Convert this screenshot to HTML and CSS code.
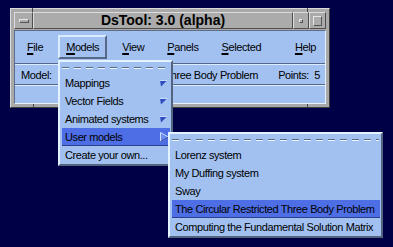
FILE: index.html
```html
<!DOCTYPE html>
<html lang="en">
<head>
  <meta charset="UTF-8" />
  <title>DsTool</title>
  <link rel="stylesheet" href="styles.css">
</head>
<body>
  <div class="window">
    <span class="mark mark-tl"></span>
    <span class="mark mark-tr"></span>
    <span class="mark mark-bl"></span>
    <span class="mark mark-br"></span>
    <div class="titlebar">
      <div class="tbtn menu-btn"><span class="bar"></span></div>
      <div class="title">DsTool: 3.0 (alpha)</div>
      <div class="tbtn min-btn"><span class="dot"></span></div>
      <div class="tbtn max-btn"><span class="box"></span></div>
    </div>
    <div class="client">
      <div class="menubar">
        <span class="mb-item"><u>F</u>ile</span>
        <span class="mb-item open"><u>M</u>odels</span>
        <span class="mb-item"><u>V</u>iew</span>
        <span class="mb-item"><u>P</u>anels</span>
        <span class="mb-item"><u>S</u>elected</span>
        <span class="mb-item help"><u>H</u>elp</span>
      </div>
      <div class="status">
        <span><span class="label">Model:</span>The Circular Restricted Three Body Problem</span>
        <span class="points">Points:&nbsp; 5</span>
      </div>
      <div class="row"></div>
    </div>
  </div>

  <div class="menu dropdown">
    <div class="tear"></div>
    <div class="item">Mappings <svg class="arrow" width="7" height="7" viewBox="0 0 7 7"><polygon points="0,0.5 7,0.5 1,6.5" fill="#2f4cc0"/><polyline points="0,0.5 7,0.5" stroke="#c8dcff" stroke-width="1" fill="none"/></svg></div>
    <div class="item">Vector Fields <svg class="arrow" width="7" height="7" viewBox="0 0 7 7"><polygon points="0,0.5 7,0.5 1,6.5" fill="#2f4cc0"/><polyline points="0,0.5 7,0.5" stroke="#c8dcff" stroke-width="1" fill="none"/></svg></div>
    <div class="item">Animated systems <svg class="arrow" width="7" height="7" viewBox="0 0 7 7"><polygon points="0,0.5 7,0.5 1,6.5" fill="#2f4cc0"/><polyline points="0,0.5 7,0.5" stroke="#c8dcff" stroke-width="1" fill="none"/></svg></div>
    <div class="item sel">User models <svg class="arrow open-arrow" width="9" height="10" viewBox="0 0 9 10"><polygon points="0.5,0.5 8.5,5 0.5,9.5" fill="#6d8bf0" stroke="#c8dcff" stroke-width="1"/><line x1="0.5" y1="9.5" x2="8.5" y2="5" stroke="#24368a" stroke-width="1"/></svg></div>
    <div class="item">Create your own...</div>
  </div>

  <div class="menu submenu">
    <div class="tear"></div>
    <div class="item">Lorenz system</div>
    <div class="item">My Duffing system</div>
    <div class="item">Sway</div>
    <div class="item sel">The Circular Restricted Three Body Problem</div>
    <div class="item">Computing the Fundamental Solution Matrix</div>
  </div>
</body>
</html>
```

FILE: styles.css
```css
body {
  margin: 0;
  background: #000046;
  font-family: "Liberation Sans", Arial, sans-serif;
  font-size: 11px;
  letter-spacing: -0.4px;
  color: #000;
}

/* main window */
.window {
  position: relative;
  width: 320px;
  height: 100px;
  box-sizing: border-box;
  margin: 8px 0 0 10px;
  padding: 3px;
  background: #a9a9a9;
  border: 1px solid;
  border-color: #dadada #3c3c3c #3c3c3c #dadada;
}

.mark {
  position: absolute;
  background: #4a4a4a;
}

.mark-tl { left: 21px; top: -1px; width: 1px; height: 4px; }
.mark-tr { right: 21px; top: -1px; width: 1px; height: 4px; }
.mark-bl { left: 22px; bottom: -1px; width: 1px; height: 4px; }
.mark-br { right: 21px; bottom: -1px; width: 1px; height: 4px; }

.titlebar {
  display: flex;
  height: 17px;
}

.tbtn, .title {
  box-sizing: border-box;
  background: #ababab;
  border: 1px solid;
  border-color: #dcdcdc #4e4e4e #4e4e4e #dcdcdc;
}

.menu-btn {
  width: 19px;
  display: flex;
  align-items: center;
  justify-content: center;
}

.menu-btn .bar {
  width: 8px;
  height: 2px;
  border: 1px solid;
  border-color: #e6e6e6 #555 #555 #e6e6e6;
}

.title {
  flex: 1;
  text-align: center;
  font-weight: bold;
  font-size: 14px;
  line-height: 15px;
  letter-spacing: 0;
}

.min-btn {
  width: 16px;
  display: flex;
  align-items: center;
  justify-content: center;
}

.min-btn .dot {
  width: 2px;
  height: 2px;
  border: 1px solid;
  border-color: #e6e6e6 #555 #555 #e6e6e6;
}

.max-btn {
  width: 17px;
  display: flex;
  align-items: center;
  justify-content: center;
}

.max-btn .box {
  width: 7px;
  height: 8px;
  border: 1px solid;
  border-color: #e6e6e6 #555 #555 #e6e6e6;
}

.client {
  margin-top: 1px;
  height: 74px;
  box-sizing: border-box;
  background: #a2c1f1;
  border: 1px solid;
  border-color: #5e6e88 #e6f2ff #e6f2ff #5e6e88;
}

.menubar {
  display: flex;
  align-items: center;
  gap: 7px;
  height: 32px;
  padding: 0 1px 0 4px;
  border-bottom: 1px solid #56688a;
}

.mb-item {
  padding: 0 6px;
  height: 20px;
  line-height: 20px;
  border: 2px solid transparent;
}

.mb-item.open {
  border-color: #dcecff #56688a #56688a #dcecff;
}

.mb-item.help {
  margin-left: auto;
}

u {
  text-decoration-thickness: 2px;
  text-underline-offset: 2px;
}

.status {
  display: flex;
  justify-content: space-between;
  align-items: center;
  height: 19px;
  padding: 0 5px 0 6px;
  border-top: 1px solid #dcecff;
  border-bottom: 1px solid #56688a;
}

.status .label {
  margin-right: 7px;
}

.row {
  border-top: 1px solid #dcecff;
}

/* pull-down menus */
.menu {
  position: absolute;
  box-sizing: border-box;
  height: 106px;
  background: #a2c1f1;
  border: 2px solid;
  border-color: #e2f2ff #52647e #52647e #e2f2ff;
}

.dropdown {
  left: 58px;
  top: 60px;
  width: 115px;
}

.submenu {
  left: 168px;
  top: 132px;
  width: 215px;
}

.tear {
  height: 12px;
  display: flex;
  align-items: center;
  padding: 0 2px;
}

.tear::before {
  content: "";
  flex: 1;
  height: 2px;
  background:
    repeating-linear-gradient(90deg, #5a6b86 0 7px, transparent 7px 12px) top / 100% 1px no-repeat,
    repeating-linear-gradient(90deg, #e8f4ff 0 7px, transparent 7px 12px) bottom / 100% 1px no-repeat;
}

.item {
  display: flex;
  justify-content: space-between;
  align-items: center;
  height: 18px;
  padding: 0 4px 0 5px;
  white-space: nowrap;
}

.item.sel {
  margin: 0 1px 0 2px;
  padding-left: 3px;
  padding-right: 1px;
  background: #4e6ee6;
  box-shadow: inset 0 -1px #2c3f8c;
}
```
